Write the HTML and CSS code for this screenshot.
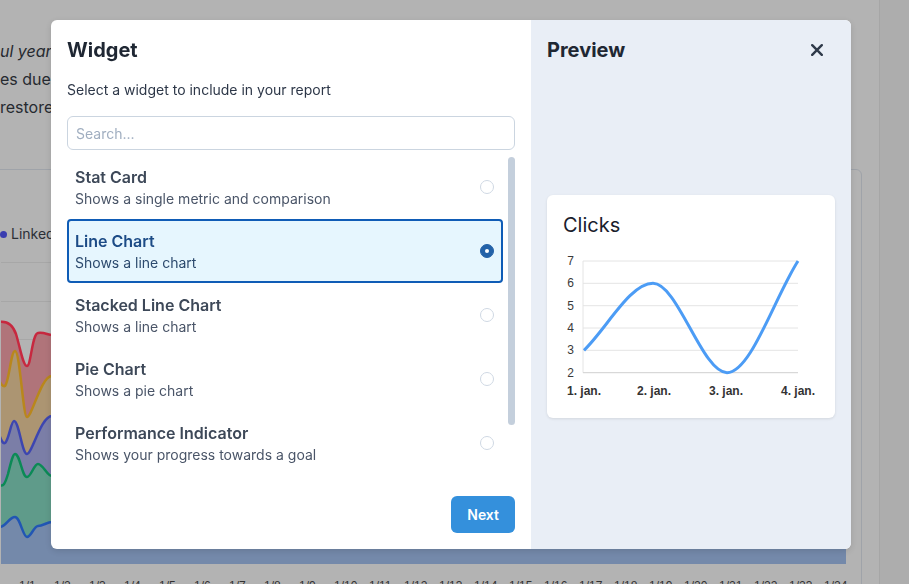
FILE: index.html
```html
<!DOCTYPE html>
<html lang="en">
<head>
  <meta charset="UTF-8">
  <title>Report – add widget</title>
  <link rel="stylesheet" href="styles.css">
</head>
<body>
  <div class="page">
    <main class="report">
      <div class="intro">
        <p class="lead">ul year</p>
        <p>es due</p>
        <p>restored</p>
      </div>

      <section class="report-card">
        <div class="legend"><span class="dot"></span>Linked</div>
        <svg class="stack-chart" width="845" height="302" viewBox="0 0 845 302">
          <g class="grid">
            <line x1="0" y1="0.5" x2="845" y2="0.5"/>
            <line x1="0" y1="39.5" x2="845" y2="39.5"/>
            <line x1="0" y1="77.5" x2="845" y2="77.5"/>
            <line x1="0" y1="115.5" x2="845" y2="115.5"/>
            <line x1="0" y1="153.5" x2="845" y2="153.5"/>
            <line x1="0" y1="190.5" x2="845" y2="190.5"/>
            <line x1="0" y1="229.5" x2="845" y2="229.5"/>
            <line x1="0" y1="267.5" x2="845" y2="267.5"/>
          </g>
          <path fill="#b0747a" d="M-2,60 C4,59 11,61 15,72 C19,85 22,104 26,104 C30,104 31,72 37,71 C43,70 47,73 51,73 L845,73 L845,302 L-2,302 Z"/>
          <path fill="#ac9572" d="M-2,118 C0,122 2,125 4,124 C8,120 10,89 14,89 C19,89 22,155 26,155 C31,155 40,114 51,114 L845,114 L845,302 L-2,302 Z"/>
          <path fill="#7b7ea7" d="M-2,172 C0,178 2,182 4,181 C8,178 10,159 13,159 C18,159 21,192 26,192 C31,192 40,154 51,154 L845,154 L845,302 L-2,302 Z"/>
          <path fill="#5f9b8a" d="M-2,222 C2,226 4,222 7,212 C10,200 12,192 14,192 C19,192 21,215 26,215 C30,215 33,202 37,202 C42,202 46,214 51,214 L845,214 L845,302 L-2,302 Z"/>
          <path fill="#7489aa" d="M-2,265 C4,266 8,255 14,255 C19,255 22,275 26,275 C30,275 33,264 37,264 C42,264 46,260 51,260 L845,260 L845,302 L-2,302 Z"/>
          <g class="lines">
            <path stroke="#c7283f" d="M-2,60 C4,59 11,61 15,72 C19,85 22,104 26,104 C30,104 31,72 37,71 C43,70 47,73 51,73 L845,73"/>
            <path stroke="#b9871c" d="M-2,118 C0,122 2,125 4,124 C8,120 10,89 14,89 C19,89 22,155 26,155 C31,155 40,114 51,114 L845,114"/>
            <path stroke="#3d46b0" d="M-2,172 C0,178 2,182 4,181 C8,178 10,159 13,159 C18,159 21,192 26,192 C31,192 40,154 51,154 L845,154"/>
            <path stroke="#0b8a56" d="M-2,222 C2,226 4,222 7,212 C10,200 12,192 14,192 C19,192 21,215 26,215 C30,215 33,202 37,202 C42,202 46,214 51,214 L845,214"/>
            <path stroke="#2156b4" d="M-2,265 C4,266 8,255 14,255 C19,255 22,275 26,275 C30,275 33,264 37,264 C42,264 46,260 51,260 L845,260"/>
          </g>
        </svg>
        <div class="axis">
          <span>1/1</span><span>1/2</span><span>1/3</span><span>1/4</span><span>1/5</span>
          <span>1/6</span><span>1/7</span><span>1/8</span><span>1/9</span><span>1/10</span>
          <span>1/11</span><span>1/12</span><span>1/13</span><span>1/14</span><span>1/15</span>
          <span>1/16</span><span>1/17</span><span>1/18</span><span>1/19</span><span>1/20</span>
          <span>1/21</span><span>1/22</span><span>1/23</span><span>1/24</span>
        </div>
      </section>
    </main>
    <div class="side-strip"></div>
  </div>

  <div class="overlay">
    <div class="modal">
      <div class="picker">
        <h2>Widget</h2>
        <p class="hint">Select a widget to include in your report</p>
        <input class="search" type="text" placeholder="Search...">

        <div class="list-wrap">
          <div class="widget-list">
            <div class="widget-item">
              <div>
                <div class="name">Stat Card</div>
                <div class="desc">Shows a single metric and comparison</div>
              </div>
              <span class="radio"></span>
            </div>
            <div class="widget-item selected">
              <div>
                <div class="name">Line Chart</div>
                <div class="desc">Shows a line chart</div>
              </div>
              <span class="radio"></span>
            </div>
            <div class="widget-item">
              <div>
                <div class="name">Stacked Line Chart</div>
                <div class="desc">Shows a line chart</div>
              </div>
              <span class="radio"></span>
            </div>
            <div class="widget-item">
              <div>
                <div class="name">Pie Chart</div>
                <div class="desc">Shows a pie chart</div>
              </div>
              <span class="radio"></span>
            </div>
            <div class="widget-item">
              <div>
                <div class="name">Performance Indicator</div>
                <div class="desc">Shows your progress towards a goal</div>
              </div>
              <span class="radio"></span>
            </div>
            <div class="widget-item">
              <div>
                <div class="name">Table</div>
                <div class="desc">Shows the data as a table</div>
              </div>
              <span class="radio"></span>
            </div>
          </div>
          <div class="scroll-thumb"></div>
        </div>

        <div class="picker-footer">
          <button class="next">Next</button>
        </div>
      </div>

      <div class="preview">
        <div class="preview-head">
          <h2>Preview</h2>
          <button class="close" aria-label="Close">
            <svg width="12" height="12" viewBox="0 0 12 12"><path d="M1.2 1.2 L10.8 10.8 M10.8 1.2 L1.2 10.8"/></svg>
          </button>
        </div>
        <div class="preview-body">
          <div class="chart-card">
            <h3>Clicks</h3>
            <svg class="line-chart" width="255" height="163" viewBox="0 0 255 163">
              <g class="grid">
                <line x1="20" y1="22" x2="235" y2="22"/>
                <line x1="20" y1="44.3" x2="235" y2="44.3"/>
                <line x1="20" y1="66.7" x2="235" y2="66.7"/>
                <line x1="20" y1="89" x2="235" y2="89"/>
                <line x1="20" y1="111.3" x2="235" y2="111.3"/>
                <line x1="20" y1="22" x2="20" y2="133.7"/>
              </g>
              <line class="base" x1="20" y1="133.7" x2="235" y2="133.7"/>
              <g class="ticks-y">
                <text x="11" y="26">7</text>
                <text x="11" y="48.3">6</text>
                <text x="11" y="70.7">5</text>
                <text x="11" y="93">4</text>
                <text x="11" y="115.3">3</text>
                <text x="11" y="137.7">2</text>
              </g>
              <g class="ticks-x">
                <text x="21" y="156">1. jan.</text>
                <text x="91" y="156">2. jan.</text>
                <text x="163" y="156">3. jan.</text>
                <text x="235" y="156">4. jan.</text>
              </g>
              <path class="curve" d="M21,111.3 C44,89 67,44.3 90,44.3 C114.7,44.3 139.3,133.7 164,133.7 C187.7,133.7 211.3,59.2 235,22"/>
            </svg>
          </div>
        </div>
      </div>
    </div>
  </div>
</body>
</html>
```

FILE: styles.css
```css
body { margin: 0; background: #b3b3b3; font-family: Inter, "Noto Sans", sans-serif; overflow: hidden; }

/* page under the dialog */
.page { display: flex; height: 584px; overflow: hidden; }
.report { width: 879px; flex: none; border-right: 1px solid #a6a6a6; overflow: hidden; }
.side-strip { flex: 1; background: #adadad; }
.intro { padding-top: 37px; color: #262a30; font-size: 16px; line-height: 28px; white-space: nowrap; }
.intro p { margin: 0; }
.intro .lead { font-style: italic; }
.report-card { margin: 48px 0 0 -20px; width: 880px; height: 440px; border: 1px solid #9fa3a9; border-radius: 6px; }
.legend { display: flex; align-items: center; gap: 4px; padding: 54px 0 0 19px; font-size: 14px; line-height: 20px; color: #2b2f36; }
.legend .dot { width: 7px; height: 7px; border-radius: 50%; background: #3a3db0; }
.stack-chart { display: block; margin: 18px 0 0 20px; }
.stack-chart .grid line { stroke: #a7a7a7; stroke-width: 1; }
.stack-chart .lines path { fill: none; stroke-width: 2.5; }
.axis { display: flex; margin: 15px 0 0 38px; font-family: "Liberation Sans", Arial, sans-serif; font-size: 12px; line-height: 14px; color: #333; }
.axis span { width: 35px; }

/* dialog */
.overlay { position: fixed; inset: 0; padding: 20px 0 0 51px; }
.modal { display: flex; width: 800px; background: #fff; border-radius: 6px; overflow: hidden; box-shadow: 0 2px 6px rgba(0, 0, 0, 0.12); }
.picker { width: 480px; flex: none; box-sizing: border-box; padding: 16px; display: flex; flex-direction: column; }
.picker h2, .preview h2 { margin: 0; font-size: 20px; line-height: 28px; font-weight: 700; color: #1f2733; }
.hint { margin: 16px 0 0; font-size: 14px; line-height: 20px; color: #2d3748; }
.search { margin-top: 16px; height: 34px; box-sizing: border-box; padding: 0 8px; border: 1px solid #cbd5e0; border-radius: 6px; font: 14px Inter, sans-serif; color: #2d3748; outline: none; }
.search::placeholder { color: #a0aec0; }

.list-wrap { position: relative; margin-top: 5px; }
.widget-list { height: 321px; overflow: hidden; }
.scroll-thumb { position: absolute; top: 2px; right: 0; width: 7px; height: 268px; border-radius: 4px; background: #c4cfdc; }
.widget-item { display: flex; align-items: center; justify-content: space-between; margin-right: 12px; padding: 8px 7px 8px 6px; border: 2px solid transparent; border-radius: 4px; }
.widget-item .name { font-size: 16px; line-height: 24px; font-weight: 600; color: #3d4858; }
.widget-item .desc { font-size: 14px; line-height: 20px; color: #4a5568; }
.widget-item.selected { background: #e6f6fe; border-color: #0f5cb6; }
.widget-item.selected .name { color: #1c4b86; }
.widget-item.selected .desc { color: #2c4a6e; }
.radio { width: 14px; height: 14px; box-sizing: border-box; border: 1.5px solid #cfd8e3; border-radius: 50%; display: flex; align-items: center; justify-content: center; }
.selected .radio { background: #2362a8; border-color: #2362a8; }
.selected .radio::after { content: ""; width: 4px; height: 4px; border-radius: 50%; background: #fff; }

.picker-footer { display: flex; justify-content: flex-end; margin-top: 20px; }
.next { height: 37px; padding: 0 16px; border: none; border-radius: 6px; background: #3490dc; color: #fff; font: 600 14px Inter, sans-serif; }

.preview { flex: 1; background: #e9eef6; padding: 16px 16px 0; display: flex; flex-direction: column; }
.preview-head { display: flex; justify-content: space-between; align-items: center; }
.close { width: 36px; height: 28px; padding: 0; border: none; background: none; display: flex; align-items: center; justify-content: center; }
.close path { stroke: #2f3a4a; stroke-width: 2.4; stroke-linecap: round; }
.preview-body { flex: 1; display: flex; align-items: center; }
.chart-card { width: 100%; box-sizing: border-box; padding: 16px; background: #fff; border-radius: 6px; box-shadow: 0 1px 3px rgba(0, 0, 0, 0.1); }
.chart-card h3 { margin: 0; font-size: 20px; line-height: 28px; font-weight: 400; color: #1a202c; }
.line-chart { display: block; }
.line-chart .grid line { stroke: #e4e4e4; stroke-width: 1; }
.line-chart .base { stroke: #cfcfcf; stroke-width: 1; }
.line-chart text { font-family: "Liberation Sans", Arial, sans-serif; font-size: 12px; fill: #3a3a3a; }
.line-chart .ticks-y text { text-anchor: end; }
.line-chart .ticks-x text { text-anchor: middle; font-weight: 700; fill: #333; }
.line-chart .curve { fill: none; stroke: #4c9cf5; stroke-width: 3; }
```
